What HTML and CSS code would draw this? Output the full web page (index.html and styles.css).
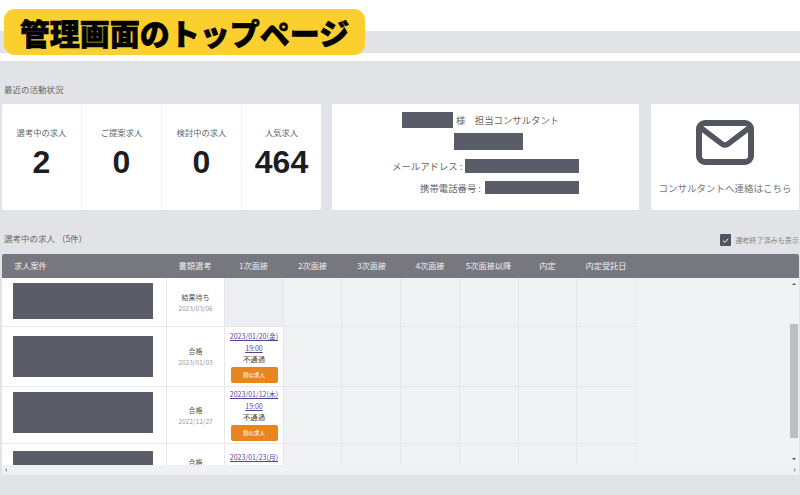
FILE: index.html
```html
<!DOCTYPE html>
<html lang="ja">
<head>
<meta charset="utf-8">
<title>管理画面のトップページ</title>
<link rel="stylesheet" href="styles.css">
</head>
<body>
<div class="badge">管理画面のトップページ</div>
<div class="topbar"></div>
<div class="navband"></div>
<div class="gap"></div>
<main class="page">
  <h2 class="heading">最近の活動状況</h2>
  <section class="cards">
    <div class="card stats">
      <div class="stat"><span class="stat-label">選考中の求人</span><strong class="stat-num">2</strong></div>
      <div class="stat"><span class="stat-label">ご提案求人</span><strong class="stat-num">0</strong></div>
      <div class="stat"><span class="stat-label">検討中の求人</span><strong class="stat-num">0</strong></div>
      <div class="stat"><span class="stat-label">人気求人</span><strong class="stat-num">464</strong></div>
    </div>
    <div class="card consultant">
      <div class="line line-a"><span class="mask mask-name"></span><span>様　担当コンサルタント</span></div>
      <div class="line line-b"><span class="mask mask-person"></span></div>
      <div class="line line-c"><span class="label-mail">メールアドレス :</span><span class="mask mask-mail"></span></div>
      <div class="line line-d"><span class="label-tel">携帯電話番号 :</span><span class="mask mask-tel"></span></div>
    </div>
    <div class="card contact">
      <svg class="mail-icon" viewBox="0 0 58 45" width="58" height="45" aria-hidden="true">
        <rect x="3" y="3" width="52" height="39" rx="6" fill="none" stroke="#54565f" stroke-width="6"/>
        <path d="M5 8 L26 24 Q29 26 32 24 L53 8" fill="none" stroke="#54565f" stroke-width="5.5" stroke-linecap="round"/>
      </svg>
      <span class="contact-text">コンサルタントへ連絡はこちら</span>
    </div>
  </section>
  <div class="table-head">
    <h2 class="heading heading-table">選考中の求人 （5件）</h2>
    <label class="toggle">
      <span class="check"><svg viewBox="0 0 11 11" width="11" height="11" aria-hidden="true"><path d="M3 5.6 L4.9 7.4 L8.2 3.8" fill="none" stroke="#fff" stroke-width="1"/></svg></span>
      <span>選考終了済みも表示</span>
    </label>
  </div>
  <section class="table">
    <div class="grid-head thead">
      <div class="th th-first">求人案件</div>
      <div class="th">書類選考</div>
      <div class="th">1次面接</div>
      <div class="th">2次面接</div>
      <div class="th">3次面接</div>
      <div class="th">4次面接</div>
      <div class="th">5次面接以降</div>
      <div class="th">内定</div>
      <div class="th">内定受託日</div>
    </div>
    <div class="tbody-wrap">
      <div class="tbody">
        <div class="grid row row-1">
          <div class="td job"><span class="mask job-mask mask-r1"></span></div>
          <div class="td doc"><span class="status">結果待ち</span><span class="date">2023/03/06</span></div>
          <div class="td empty first-empty"></div>
          <div class="td empty"></div><div class="td empty"></div><div class="td empty"></div><div class="td empty"></div><div class="td empty"></div><div class="td empty"></div>
        </div>
        <div class="grid row row-2">
          <div class="td job"><span class="mask job-mask mask-r2"></span></div>
          <div class="td doc"><span class="status">合格</span><span class="date">2023/01/03</span></div>
          <div class="td iv"><a class="iv-link" href="#">2023/01/20(金)</a><a class="iv-link" href="#">19:00</a><span class="iv-result">不通過</span><a class="btn" href="#">類似求人</a></div>
          <div class="td empty"></div><div class="td empty"></div><div class="td empty"></div><div class="td empty"></div><div class="td empty"></div><div class="td empty"></div>
        </div>
        <div class="grid row row-3">
          <div class="td job"><span class="mask job-mask mask-r3"></span></div>
          <div class="td doc"><span class="status">合格</span><span class="date">2022/12/27</span></div>
          <div class="td iv iv-r3"><a class="iv-link" href="#">2023/01/12(木)</a><a class="iv-link" href="#">19:00</a><span class="iv-result">不通過</span><a class="btn" href="#">類似求人</a></div>
          <div class="td empty"></div><div class="td empty"></div><div class="td empty"></div><div class="td empty"></div><div class="td empty"></div><div class="td empty"></div>
        </div>
        <div class="grid row row-4">
          <div class="td job"><span class="mask job-mask mask-r4"></span></div>
          <div class="td doc doc-top"><span class="status">合格</span></div>
          <div class="td iv iv-r4"><a class="iv-link" href="#">2023/01/23(月)</a></div>
          <div class="td empty"></div><div class="td empty"></div><div class="td empty"></div><div class="td empty"></div><div class="td empty"></div><div class="td empty"></div>
        </div>
      </div>
      <div class="vscroll">
        <span class="arrow arrow-up"></span>
        <span class="thumb"></span>
        <span class="arrow arrow-down"></span>
      </div>
    </div>
    <div class="hscroll">
      <span class="arrow arrow-left"></span>
      <span class="arrow arrow-right"></span>
    </div>
  </section>
</main>
</body>
</html>
```
FILE: styles.css
```css
* { box-sizing: border-box; }
html, body { margin: 0; padding: 0; }
body {
  width: 800px;
  height: 495px;
  overflow: hidden;
  background: #fff;
  position: relative;
  font-family: "Noto Sans CJK JP", "Noto Sans", "Liberation Sans", sans-serif;
  color: #555;
}
.badge {
  position: absolute;
  left: 4px;
  top: 9px;
  width: 361px;
  height: 46px;
  border-radius: 11px;
  background: #fbcf2e;
  color: #000;
  font-size: 30px;
  font-weight: 900;
  line-height: 46px;
  text-align: center;
  white-space: nowrap;
  -webkit-text-stroke: 0.6px #000;
}
.topbar { height: 31px; background: #fff; }
.navband { height: 22px; background: #e1e3e7; }
.gap { height: 8px; background: #fff; }
.page { height: 434px; background: #e1e3e7; padding: 0 1px 0 2px; }
.heading {
  margin: 0;
  padding: 22px 0 0 2px;
  height: 43px;
  font-size: 8.5px;
  font-weight: 400;
  line-height: 12px;
  color: #666;
}
.cards { display: flex; height: 106px; }
.card { background: #fff; border-radius: 2px; }
.stats { width: 319px; display: flex; }
.stat {
  flex: 1;
  display: flex;
  flex-direction: column;
  align-items: center;
  padding-top: 22px;
  border-right: 1px solid #f2f3f5;
}
.stat:last-child { border-right: 0; }
.stat-label { font-size: 8.3px; line-height: 13px; color: #666; white-space: nowrap; }
.stat-num {
  font-family: "Liberation Sans", Arial, sans-serif;
  font-size: 32px;
  font-weight: 700;
  line-height: 36px;
  margin-top: 5px;
  color: #1d1d1f;
}
.consultant {
  width: 307px;
  margin-left: 11px;
  padding-top: 8px;
  display: flex;
  flex-direction: column;
  font-size: 9.4px;
  color: #666;
}
.line { display: flex; align-items: center; white-space: nowrap; }
.line-a { margin-left: 70px; height: 16px; gap: 3px; }
.line-b { margin-left: 122px; height: 17px; margin-top: 5px; }
.line-c { margin-left: 60px; height: 14px; margin-top: 9px; }
.line-d { margin-left: 88px; height: 13px; margin-top: 8px; }
.label-mail { width: 73px; flex: none; }
.label-tel { width: 65px; flex: none; }
.mask { display: block; background: #5a5d68; flex: none; }
.mask-name { width: 51px; height: 16px; }
.mask-person { width: 69px; height: 17px; }
.mask-mail { width: 114px; height: 14px; }
.mask-tel { width: 94px; height: 13px; }
.contact {
  width: 148px;
  margin-left: 12px;
  display: flex;
  flex-direction: column;
  align-items: center;
  padding-top: 16px;
}
.mail-icon { display: block; }
.contact-text { margin-top: 16px; font-size: 9.5px; line-height: 14px; color: #777; white-space: nowrap; }
.table-head { height: 44px; display: flex; justify-content: space-between; }
.heading-table { padding-top: 22px; height: 44px; font-size: 8.5px; }
.toggle {
  display: flex;
  gap: 4px;
  align-items: center;
  height: 12px;
  margin-top: 24px;
  font-size: 7.1px;
  color: #888;
  white-space: nowrap;
}
.check { display: block; width: 11px; height: 12px; background: #51535e; border-radius: 1px; }
.check svg { display: block; margin-top: 1px; }
.table { width: 797px; height: 221px; background: #f1f2f4; }
.grid-head { display: grid; grid-template-columns: 164px 58px 59px 59px 59px 58px 59px 59px 58px; }
.grid { display: grid; grid-template-columns: 165px 58px 59px 58px 59px 59px 59px 58px 59px; }
.thead { height: 24px; padding-bottom: 2px; background: #77777f; border-radius: 2px 2px 0 0; }
.th {
  display: flex;
  align-items: center;
  justify-content: center;
  font-size: 8.2px;
  color: #f0f0f0;
  white-space: nowrap;
}
.th-first { justify-content: flex-start; padding-left: 12px; }
.tbody-wrap { display: flex; height: 187px; overflow: hidden; }
.tbody { flex: 1; }
.row { width: 634px; border-bottom: 1px solid #e6e7ea; }
.row-1 { height: 49px; }
.row-2 { height: 60px; }
.row-3 { height: 57px; }
.row-4 { height: 40px; border-bottom: 0; }
.td { border-right: 1px solid #e6e7ea; background: #f1f2f4; }
.td:last-child { border-right-color: #ebecee; }
.job { background: #fff; padding-left: 11px; }
.job-mask { width: 140px; }
.mask-r1 { height: 36px; margin-top: 5px; }
.mask-r2 { height: 41px; margin-top: 9px; }
.mask-r3 { height: 41px; margin-top: 5px; }
.mask-r4 { height: 30px; margin-top: 7px; }
.doc {
  background: #fff;
  display: flex;
  flex-direction: column;
  align-items: center;
  justify-content: center;
  gap: 1px;
}
.doc-top { justify-content: flex-start; padding-top: 13px; }
.status { font-size: 7px; line-height: 10px; color: #555; }
.date { font-size: 6.6px; line-height: 10px; color: #999; white-space: nowrap; }
.first-empty { background: #eceef1; }
.iv {
  background: #fff;
  display: flex;
  flex-direction: column;
  align-items: center;
  padding-top: 4px;
}
.iv-r3 { padding-top: 2px; }
.iv-r4 { padding-top: 8px; }
.iv-link { font-size: 7px; line-height: 11.5px; color: #5b3f94; white-space: nowrap; }
.iv-result { font-size: 7.4px; line-height: 10px; color: #444; }
.btn {
  display: flex;
  align-items: center;
  justify-content: center;
  width: 47px;
  height: 16px;
  margin-top: 3px;
  background: #e8851f;
  border-radius: 2px;
  font-size: 5.5px;
  color: #fff;
  text-decoration: none;
}
.vscroll {
  position: relative;
  width: 10px;
  flex: none;
  padding-top: 46px;
}
.thumb { display: block; width: 8px; margin-left: 1px; height: 114px; background: #bcbdbf; }
.arrow { position: absolute; width: 0; height: 0; border-style: solid; border-color: transparent; }
.arrow-up { top: 5px; left: 3px; border-width: 0 2px 2px; border-bottom-color: #555; }
.arrow-down { bottom: 5px; left: 3px; border-width: 2px 2px 0; border-top-color: #444; }
.hscroll { position: relative; height: 10px; background: #f0f1f2; }
.arrow-left { top: 3px; left: 3px; border-width: 2px 2px 2px 0; border-right-color: #999; }
.arrow-right { top: 3px; right: 3px; border-width: 2px 0 2px 2px; border-left-color: #999; }
```
